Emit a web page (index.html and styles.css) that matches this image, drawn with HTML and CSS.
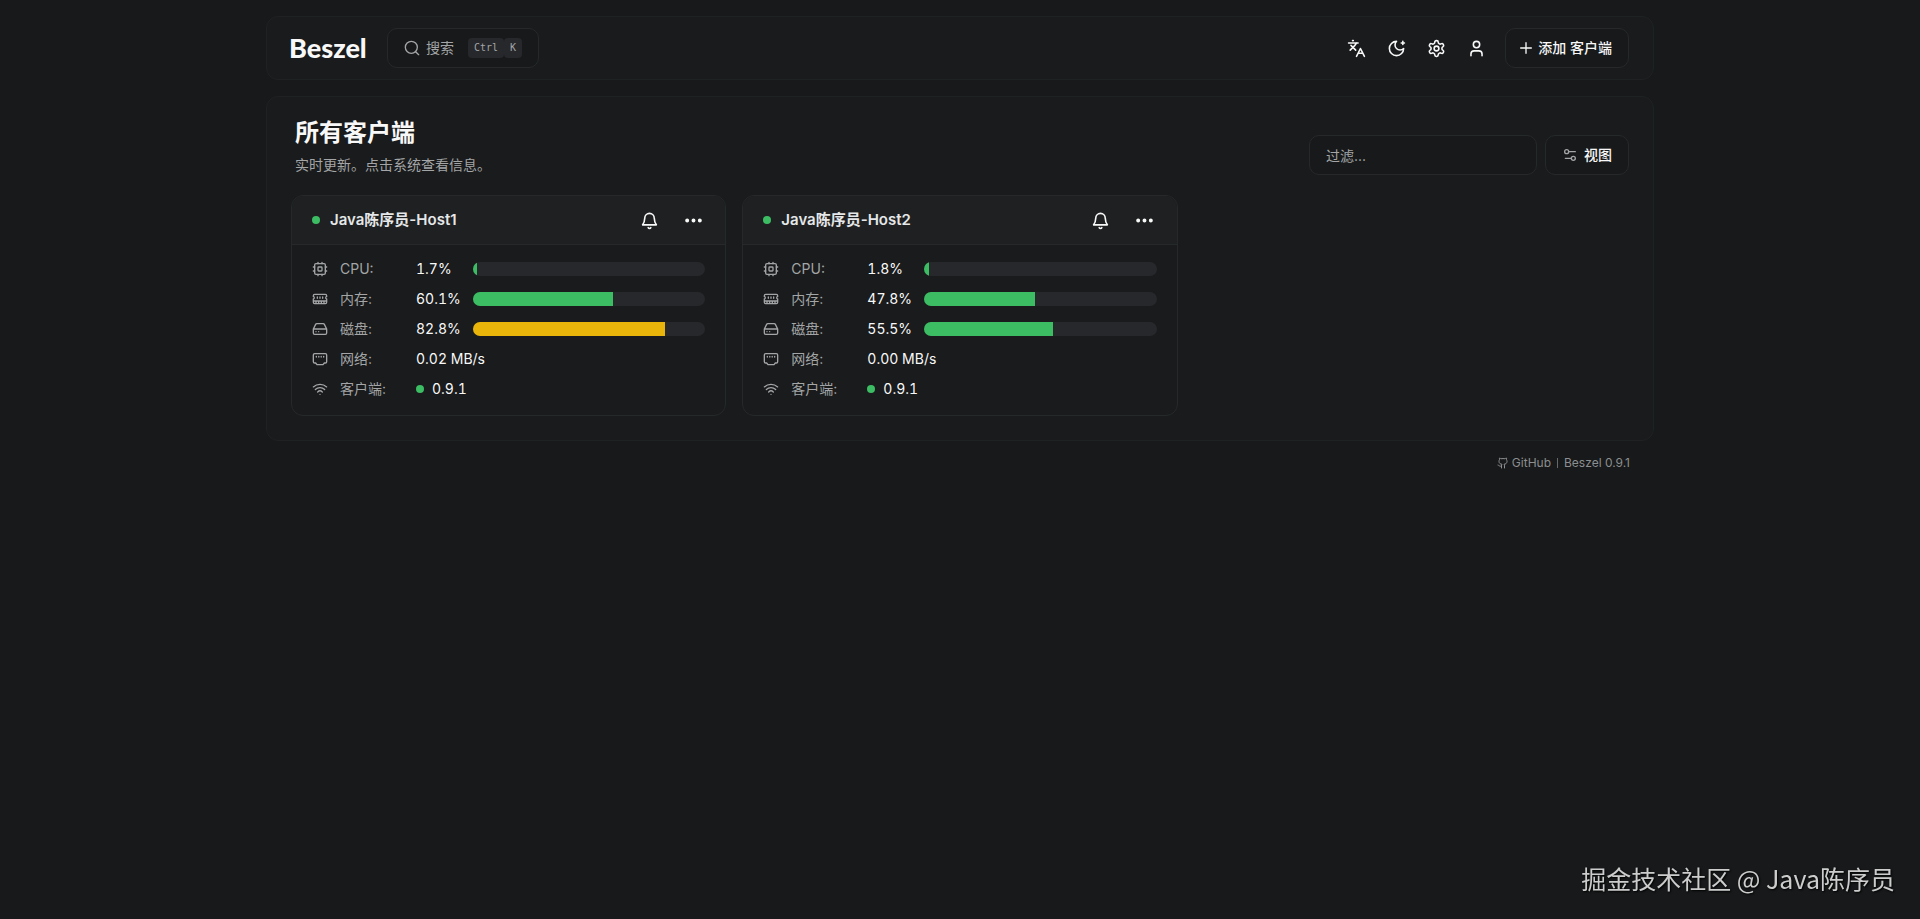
FILE: index.html
```html
<!DOCTYPE html>
<html lang="zh-CN">

<head>
    <meta charset="UTF-8">
    <meta name="viewport" content="width=device-width, initial-scale=1.0">
    <title>Beszel</title>
    <link rel="stylesheet" href="styles.css">
</head>

<body>
    <svg class="sprite" aria-hidden="true">
        <symbol id="i-search" viewBox="0 0 24 24"><circle cx="11" cy="11" r="9"/><path d="m22 22-4.500-4.500"/></symbol>
        <symbol id="i-lang" viewBox="0 0 24 24"><path d="m5 8 6 6M4 14l6-6 2-3M2 5h12M7 2h1M22 22l-5-10-5 10M14 18h6"/></symbol>
        <symbol id="i-moon" viewBox="0 0 24 24"><path d="M12 3a6 6 0 0 0 9 9 9 9 0 1 1-9-9M20 3v4M22 5h-4"/></symbol>
        <symbol id="i-settings" viewBox="0 0 24 24"><path d="M12.220 2h-.44a2 2 0 0 0-2 2v.18a2 2 0 0 1-1 1.730l-.43.25a2 2 0 0 1-2 0l-.15-.08a2 2 0 0 0-2.730.73l-.22.38a2 2 0 0 0 .73 2.730l.15.1a2 2 0 0 1 1 1.720v.51a2 2 0 0 1-1 1.740l-.15.09a2 2 0 0 0-.73 2.730l.22.38a2 2 0 0 0 2.730.73l.15-.08a2 2 0 0 1 2 0l.43.25a2 2 0 0 1 1 1.730V20a2 2 0 0 0 2 2h.44a2 2 0 0 0 2-2v-.18a2 2 0 0 1 1-1.730l.43-.25a2 2 0 0 1 2 0l.15.08a2 2 0 0 0 2.730-.73l.22-.39a2 2 0 0 0-.73-2.730l-.15-.08a2 2 0 0 1-1-1.740v-.5a2 2 0 0 1 1-1.740l.15-.09a2 2 0 0 0 .73-2.730l-.22-.38a2 2 0 0 0-2.730-.73l-.15.08a2 2 0 0 1-2 0l-.43-.25a2 2 0 0 1-1-1.730V4a2 2 0 0 0-2-2z"/><circle cx="12" cy="12" r="3"/></symbol>
        <symbol id="i-user" viewBox="0 0 24 24"><circle cx="12" cy="7" r="4"/><path d="M19 21v-2a4 4 0 0 0-4-4H9a4 4 0 0 0-4 4v2"/></symbol>
        <symbol id="i-plus" viewBox="0 0 24 24"><path d="M4 12h16M12 4v16"/></symbol>
        <symbol id="i-view" viewBox="0 0 24 24"><path d="M20 7h-9M14 17H5"/><circle cx="17" cy="17" r="3"/><circle cx="7" cy="7" r="3"/></symbol>
        <symbol id="i-bell" viewBox="0 0 24 24"><path d="M10.300 21a1.940 1.940 0 0 0 3.400 0M3.300 17.500h17.400c-1.800-2-2.500-4-2.700-8.500a6 6 0 0 0-12 0c-.2 4.500-.9 6.500-2.700 8.500z"/></symbol>
        <symbol id="i-dots" viewBox="0 0 24 24"><g fill="currentColor"><circle cx="12" cy="12" r="1.500"/><circle cx="20" cy="12" r="1.500"/><circle cx="4" cy="12" r="1.500"/></g></symbol>
        <symbol id="i-cpu" viewBox="0 0 24 24"><rect width="16" height="16" x="4" y="4" rx="2"/><rect width="6" height="6" x="9" y="9" rx="1"/><path d="M15 2v2M15 20v2M2 15h2M2 9h2M20 15h2M20 9h2M9 2v2M9 20v2"/></symbol>
        <symbol id="i-memory" viewBox="0 0 24 24"><path d="M6 19v-3M10 19v-3M14 19v-3M18 19v-3M8 11V9M16 11V9M12 11V9M2 15h20M2 7a2 2 0 0 1 2-2h16a2 2 0 0 1 2 2v1.100a2 2 0 0 0 0 3.837V17a2 2 0 0 1-2 2H4a2 2 0 0 1-2-2v-5.100a2 2 0 0 0 0-3.837Z"/></symbol>
        <symbol id="i-disk" viewBox="0 0 24 24"><path d="M22 12H2M5.450 5.110 2 12v6a2 2 0 0 0 2 2h16a2 2 0 0 0 2-2v-6l-3.450-6.890A2 2 0 0 0 16.760 4H7.240a2 2 0 0 0-1.790 1.110zM6 16h.01M10 16h.01"/></symbol>
        <symbol id="i-net" viewBox="0 0 24 24"><path d="M4 4h16a2 2 0 0 1 2 2v10a2 2 0 0 1-2 2h-1.500l-2 2.500h-9L5.500 18H4a2 2 0 0 1-2-2V6a2 2 0 0 1 2-2zM6.500 8v1M10.200 8v1M13.800 8v1M17.500 8v1"/></symbol>
        <symbol id="i-wifi" viewBox="0 0 24 24"><path d="M12 20h.01M2 8.820a15 15 0 0 1 20 0M5 12.859a10 10 0 0 1 14 0M8.500 16.429a5 5 0 0 1 7 0"/></symbol>
        <symbol id="i-github" viewBox="0 0 24 24"><path d="M15 22v-4a4.800 4.800 0 0 0-1-3.500c3 0 6-2 6-5.500.08-1.250-.27-2.480-1-3.500.28-1.150.28-2.350 0-3.500 0 0-1 0-3 1.500-2.640-.5-5.360-.5-8 0C6 2 5 2 5 2c-.3 1.150-.3 2.350 0 3.500A5.400 5.400 0 0 0 4 9c0 3.500 3 5.500 6 5.500-.39.490-.68 1.050-.85 1.650S8.930 17.380 9 18v4M9 18c-4.510 2-5-2-7-2"/></symbol>
    </svg>

    <div class="container">
        <header class="navbar">
            <a href="#" class="logo">Beszel</a>
            <button class="btn search">
                <svg class="icon"><use href="#i-search"/></svg>
                <span>搜索</span>
                <span class="keys"><kbd>Ctrl</kbd><kbd>K</kbd></span>
            </button>
            <nav class="nav-actions">
                <button class="icon-btn" aria-label="语言"><svg class="icon"><use href="#i-lang"/></svg></button>
                <button class="icon-btn" aria-label="主题"><svg class="icon"><use href="#i-moon"/></svg></button>
                <a href="#" class="icon-btn" aria-label="设置"><svg class="icon"><use href="#i-settings"/></svg></a>
                <button class="icon-btn" aria-label="用户"><svg class="icon"><use href="#i-user"/></svg></button>
                <button class="btn add"><svg class="icon"><use href="#i-plus"/></svg>添加 客户端</button>
            </nav>
        </header>

        <main class="panel">
            <div class="panel-header">
                <div>
                    <h1>所有客户端</h1>
                    <p>实时更新。点击系统查看信息。</p>
                </div>
                <div class="tools">
                    <input type="text" class="filter" placeholder="过滤..." aria-label="过滤">
                    <button class="btn view"><svg class="icon"><use href="#i-view"/></svg>视图</button>
                </div>
            </div>

            <div class="grid">
                <section class="card">
                    <div class="card-header">
                        <span class="dot"></span>
                        <h2>Java陈序员-Host1</h2>
                        <button class="icon-btn" aria-label="警报"><svg class="icon"><use href="#i-bell"/></svg></button>
                        <button class="icon-btn more" aria-label="更多"><svg class="icon"><use href="#i-dots"/></svg></button>
                    </div>
                    <div class="card-body">
                        <div class="row">
                            <svg class="icon"><use href="#i-cpu"/></svg>
                            <span class="label">CPU:</span>
                            <span class="value">1.7%</span>
                            <span class="bar"><span class="fill" style="width: 1.7%"></span></span>
                        </div>
                        <div class="row">
                            <svg class="icon"><use href="#i-memory"/></svg>
                            <span class="label">内存:</span>
                            <span class="value">60.1%</span>
                            <span class="bar"><span class="fill" style="width: 60.1%"></span></span>
                        </div>
                        <div class="row">
                            <svg class="icon"><use href="#i-disk"/></svg>
                            <span class="label">磁盘:</span>
                            <span class="value">82.8%</span>
                            <span class="bar"><span class="fill warn" style="width: 82.8%"></span></span>
                        </div>
                        <div class="row">
                            <svg class="icon"><use href="#i-net"/></svg>
                            <span class="label">网络:</span>
                            <span>0.02 MB/s</span>
                        </div>
                        <div class="row">
                            <svg class="icon"><use href="#i-wifi"/></svg>
                            <span class="label">客户端:</span>
                            <span class="agent"><span class="dot"></span>0.9.1</span>
                        </div>
                    </div>
                </section>

                <section class="card">
                    <div class="card-header">
                        <span class="dot"></span>
                        <h2>Java陈序员-Host2</h2>
                        <button class="icon-btn" aria-label="警报"><svg class="icon"><use href="#i-bell"/></svg></button>
                        <button class="icon-btn more" aria-label="更多"><svg class="icon"><use href="#i-dots"/></svg></button>
                    </div>
                    <div class="card-body">
                        <div class="row">
                            <svg class="icon"><use href="#i-cpu"/></svg>
                            <span class="label">CPU:</span>
                            <span class="value">1.8%</span>
                            <span class="bar"><span class="fill" style="width: 1.8%"></span></span>
                        </div>
                        <div class="row">
                            <svg class="icon"><use href="#i-memory"/></svg>
                            <span class="label">内存:</span>
                            <span class="value">47.8%</span>
                            <span class="bar"><span class="fill" style="width: 47.8%"></span></span>
                        </div>
                        <div class="row">
                            <svg class="icon"><use href="#i-disk"/></svg>
                            <span class="label">磁盘:</span>
                            <span class="value">55.5%</span>
                            <span class="bar"><span class="fill" style="width: 55.5%"></span></span>
                        </div>
                        <div class="row">
                            <svg class="icon"><use href="#i-net"/></svg>
                            <span class="label">网络:</span>
                            <span>0.00 MB/s</span>
                        </div>
                        <div class="row">
                            <svg class="icon"><use href="#i-wifi"/></svg>
                            <span class="label">客户端:</span>
                            <span class="agent"><span class="dot"></span>0.9.1</span>
                        </div>
                    </div>
                </section>
            </div>
        </main>

        <footer class="footer">
            <a href="#"><svg class="icon"><use href="#i-github"/></svg>GitHub</a>
            <span class="divider"></span>
            <a href="#">Beszel 0.9.1</a>
        </footer>
    </div>

    <div class="watermark">掘金技术社区 @ Java陈序员</div>
</body>

</html>
```
FILE: styles.css
```css
:root {
    --background: #17191a;
    --card: #191b1c;
    --card-header: #1e2021;
    --border: #1f2223;
    --control-border: #26292a;
    --muted: #27282b;
    --text: #f8f8f8;
    --muted-text: #a3a5a6;
    --green: #3cbd64;
    --yellow: #eab50a;
}

* {
    box-sizing: border-box;
}

body {
    margin: 0;
    background-color: var(--background);
    color: var(--text);
    font-family: Inter, "Noto Sans CJK SC", sans-serif;
    font-size: 14px;
    line-height: 20px;
}

h1,
h2,
p {
    margin: 0;
}

a {
    color: inherit;
    text-decoration: none;
}

button,
input {
    font: inherit;
    color: inherit;
}

.sprite {
    display: none;
}

.icon {
    width: 16px;
    height: 16px;
    flex-shrink: 0;
    fill: none;
    stroke: currentColor;
    stroke-width: 2;
    stroke-linecap: round;
    stroke-linejoin: round;
}

.container {
    max-width: 1420px;
    margin: 0 auto;
    padding: 16px;
}

.navbar {
    display: flex;
    align-items: center;
    height: 64px;
    padding: 0 24px 0 22px;
    margin-bottom: 16px;
    background-color: var(--card);
    border: 1px solid var(--border);
    border-radius: 12px;
}

.logo {
    width: 98px;
    font-family: Lato, sans-serif;
    font-size: 27px;
    font-weight: 900;
    line-height: 32px;
}

.btn {
    display: flex;
    align-items: center;
    height: 40px;
    padding: 0 16px;
    gap: 6px;
    font-weight: 500;
    background-color: var(--background);
    border: 1px solid var(--control-border);
    border-radius: 10px;
    cursor: pointer;
}

.search {
    font-weight: 400;
    color: var(--muted-text);
}

.keys {
    display: flex;
    margin-left: 8px;
}

kbd {
    height: 20px;
    padding: 0 6px;
    font-family: "DejaVu Sans Mono", monospace;
    font-size: 10px;
    background-color: var(--muted);
    border-radius: 4px;
}

.nav-actions {
    display: flex;
    align-items: center;
    margin-left: auto;
}

.icon-btn {
    display: flex;
    align-items: center;
    justify-content: center;
    width: 40px;
    height: 40px;
    padding: 0;
    background: none;
    border: none;
    cursor: pointer;
}

.icon-btn .icon {
    width: 19px;
    height: 19px;
}

.add {
    gap: 4px;
    margin-left: 9px;
    padding: 0 16px 0 12px;
}

.panel {
    padding: 20px 24px 24px;
    background-color: var(--card);
    border: 1px solid var(--border);
    border-radius: 12px;
}

.panel-header {
    display: flex;
    align-items: flex-end;
    justify-content: space-between;
    padding-left: 4px;
    margin-bottom: 20px;
}

h1 {
    margin-bottom: 6px;
    font-size: 24px;
    font-weight: 700;
    line-height: 32px;
}

.panel-header p {
    color: var(--muted-text);
}

.tools {
    display: flex;
    gap: 8px;
}

.filter {
    width: 228px;
    height: 40px;
    padding: 0 16px;
    background-color: var(--background);
    border: 1px solid var(--control-border);
    border-radius: 10px;
}

.filter::placeholder {
    color: var(--muted-text);
}

.view .icon {
    color: var(--muted-text);
}

.grid {
    display: grid;
    grid-template-columns: repeat(auto-fill, minmax(360px, 1fr));
    gap: 16px;
}

.card {
    overflow: hidden;
    border: 1px solid var(--control-border);
    border-radius: 12px;
}

.card-header {
    display: flex;
    align-items: center;
    height: 49px;
    padding: 0 12px 0 20px;
    background-color: var(--card-header);
    border-bottom: 1px solid var(--control-border);
}

.dot {
    width: 8px;
    height: 8px;
    border-radius: 50%;
    background-color: var(--green);
}

h2 {
    flex: 1;
    margin-left: 10px;
    font-size: 15px;
    font-weight: 600;
    line-height: 20px;
    color: #e5e7e8;
}

.more {
    margin-left: 4px;
}

.card-body {
    display: flex;
    flex-direction: column;
    gap: 10px;
    padding: 14px 20px 16px;
}

.row {
    display: flex;
    align-items: center;
    height: 20px;
}

.row .icon {
    color: var(--muted-text);
}

.label {
    width: 76px;
    margin-left: 12px;
    color: var(--muted-text);
}

.label + span {
    font-variant-numeric: tabular-nums;
}

.value {
    width: 57px;
}

.bar {
    display: flex;
    flex: 1;
    height: 14px;
    overflow: hidden;
    background-color: var(--muted);
    border-radius: 7px;
}

.fill {
    background-color: var(--green);
}

.fill.warn {
    background-color: var(--yellow);
}

.agent {
    display: flex;
    align-items: center;
    gap: 8px;
}

.footer {
    display: flex;
    align-items: center;
    justify-content: flex-end;
    gap: 6px;
    padding: 14px 24px;
    font-size: 12px;
    line-height: 16px;
    color: #8c8e8f;
}

.footer a {
    display: flex;
    align-items: center;
    gap: 3px;
}

.footer .icon {
    width: 12px;
    height: 12px;
}

.divider {
    width: 1px;
    height: 10px;
    background-color: #66696a;
}

.watermark {
    position: fixed;
    right: 25px;
    bottom: 23px;
    font-family: "Noto Sans CJK SC", sans-serif;
    font-size: 25px;
    line-height: 36px;
    color: #cccccc;
    text-shadow: 1px 1px 2px #000;
}
```
